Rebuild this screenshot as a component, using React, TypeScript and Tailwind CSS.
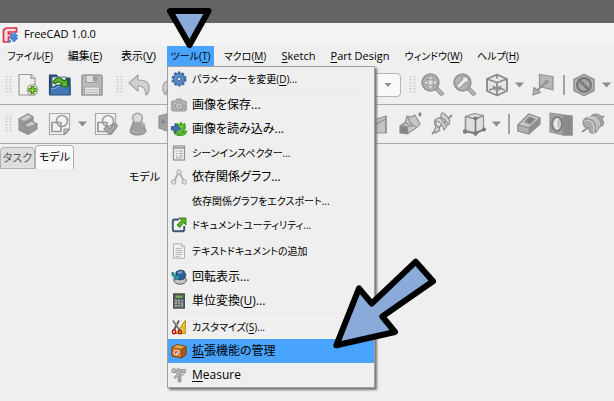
import { Fragment, type ReactNode } from 'react';
import clsx from 'clsx';

interface LabelProps {
  text: string;
  mnemonic?: string;
}

interface MenuEntry extends LabelProps {
  icon?: ReactNode;
  small?: boolean;
  active?: boolean;
  separated?: boolean;
}

function Label({ text, mnemonic }: LabelProps) {
  if (!mnemonic) return <span>{text}</span>;
  const at = text.lastIndexOf(mnemonic);
  return (
    <span>
      {text.slice(0, at)}
      <span className="underline underline-offset-2">{mnemonic}</span>
      {text.slice(at + 1)}
    </span>
  );
}

function Icon16({ children }: { children: ReactNode }) {
  return <svg viewBox="0 0 16 16" className="w-4 h-4 shrink-0" aria-hidden="true">{children}</svg>;
}

const menuEntries: MenuEntry[] = [
  {
    text: 'パラメーターを変更(D)...', mnemonic: 'D', small: true,
    icon: (
      <Icon16>
        <circle cx="8" cy="8" r="6.2" fill="none" stroke="#3c689f" strokeWidth="2.6" strokeDasharray="2.6 1.3" />
        <circle cx="8" cy="8" r="5.8" fill="#4b7fbd" stroke="#3c689f" strokeWidth=".7" />
        <circle cx="8" cy="8" r="3.7" fill="none" stroke="#6896cc" />
        <circle cx="8" cy="8" r="1.8" fill="#e8eef5" stroke="#2f5688" strokeWidth=".7" />
      </Icon16>
    ),
  },
  {
    text: '画像を保存...', separated: true,
    icon: (
      <Icon16>
        <path d="M.7 5q0-1 1-1h2.800l1-2h5l1 2h2.800q1 0 1 1v8q0 1-1 1H1.700q-1 0-1-1z" fill="#adadad" stroke="#989898" />
        <path d="M2 6h12" stroke="#c4c4c4" />
        <circle cx="8" cy="9" r="3.400" fill="#d6d6d6" stroke="#929292" />
        <circle cx="8" cy="9" r="1.800" fill="#a6a6a6" />
      </Icon16>
    ),
  },
  {
    text: '画像を読み込み...',
    icon: (
      <Icon16>
        <path d="M5 5l1-3 2 2 2-3 1.500 3 2-2 1 4q0 3-3 4v2q1-3 4-2 0 4-5 4.500H7Q3 14 2.500 10q4 0 5.500 3v-3Q5 9 5 5z" fill="#57bd2b" stroke="#2f8a16" strokeWidth=".8" />
        <path d="M8 5l1 2 2-2" fill="none" stroke="#a2ef69" />
        <path d="M.5 5.500H4v-3l5.500 4.800L4 12V9H.5z" fill="#3e74b5" stroke="#1f477b" strokeWidth=".8" />
      </Icon16>
    ),
  },
  {
    text: 'シーンインスペクター...', small: true,
    icon: (
      <Icon16>
        <rect x="2.500" y="1" width="11" height="14" fill="#f1f1f1" stroke="#929292" strokeWidth="1.200" />
        <path d="M3 3h10" stroke="#aaa" strokeWidth="2" />
        <path d="M4.500 6h1.500M7.500 6h4M5 8.500h1.500M8 8.500h4M5 11h1.500M8 11h4M5 13h6" stroke="#9f9f9f" />
      </Icon16>
    ),
  },
  {
    text: '依存関係グラフ...',
    icon: (
      <Icon16>
        <path d="M8 3L3 12.500M8 3l5 9.500" stroke="#b3b3b3" strokeWidth="2" />
        <g fill="#e3e3e3" stroke="#a6a6a6">
          <circle cx="8" cy="3" r="2.200" />
          <circle cx="2.700" cy="13" r="2.200" />
          <circle cx="13.300" cy="13" r="2.200" />
        </g>
      </Icon16>
    ),
  },
  { text: '依存関係グラフをエクスポート...', small: true },
  {
    text: 'ドキュメントユーティリティ...', small: true,
    icon: (
      <Icon16>
        <path d="M8 2.500H3.500Q1.800 2.500 1.800 4v8.500q0 1.700 1.700 1.700h8q1.700 0 1.700-1.700V9" fill="none" stroke="#3a5576" strokeWidth="1.900" />
        <path d="M8 1h7v7l-2.300-2.300-4.200 4.800-2.500-2.500 4.800-4.500z" fill="#59b71e" stroke="#236c08" strokeWidth=".8" />
      </Icon16>
    ),
  },
  {
    text: 'テキストドキュメントの追加', small: true, separated: true,
    icon: (
      <Icon16>
        <path d="M2.500.8h8l3 3v11.400h-11z" fill="#f2f2f2" stroke="#b0b0b0" />
        <path d="M10.500.8v3h3M4.500 5.500h6M4.500 7.500h7M4.500 9.500h7M4.500 11.500h7M4.500 13.500h4" fill="none" stroke="#b8b8b8" />
      </Icon16>
    ),
  },
  {
    text: '回転表示...', separated: true,
    icon: (
      <Icon16>
        <ellipse cx="9" cy="11" rx="6.400" ry="4.200" fill="#c6c6c1" stroke="#5c5c5c" />
        <path d="M5 3l4-2 4 1 2 4-2 4-5 1-3-3z" fill="#315e95" stroke="#183250" strokeWidth=".8" />
        <path d="M6 4l3-2 3 1-3 2z" fill="#75a8d5" />
        <path d="M1 3q-1 5 4 6l-1 2 5-2-3-4-.5 2Q3 7 3 4z" fill="#25a9ae" stroke="#075f66" strokeWidth=".7" />
      </Icon16>
    ),
  },
  {
    text: '単位変換(U)...', mnemonic: 'U',
    icon: (
      <Icon16>
        <rect x="2.500" y=".8" width="11" height="14.400" fill="#626762" stroke="#4c504c" />
        <rect x="4" y="2" width="8" height="3.500" fill="#7da56b" stroke="#263e22" strokeWidth=".6" />
        <path d="M4 7.500h2M7 7.500h2M4 10h2M7 10h2M4 12.700h2M7 12.700h2" stroke="#b4b7b3" strokeWidth="1.400" />
        <path d="M11 7v1.500M11 9.500v4" stroke="#78a3ce" strokeWidth="2" />
      </Icon16>
    ),
  },
  {
    text: 'カスタマイズ(S)...', mnemonic: 'S', small: true, separated: true,
    icon: (
      <Icon16>
        <path d="M14.300 1.500v13H5z" fill="#edc92b" stroke="#af8507" />
        <path d="M12 8v4H9z" fill="#fff4ad" stroke="#af8507" strokeWidth=".5" />
        <path d="M2 1.500l7 10M8 1.500L3 11" stroke="#555" strokeWidth="1.700" />
        <path d="M2.500 1.500l6 8" stroke="#ddd" strokeWidth=".7" />
        <ellipse cx="3" cy="12.800" rx="1.600" ry="2" fill="none" stroke="#bd1616" strokeWidth="1.400" />
        <ellipse cx="9" cy="13" rx="1.500" ry="1.800" fill="none" stroke="#bd1616" strokeWidth="1.400" />
      </Icon16>
    ),
  },
  {
    text: '拡張機能の管理', mnemonic: '拡', active: true,
    icon: (
      <Icon16>
        <path d="M.8 4.500L6 1.500l9 2v8l-4.500 3.500-9.700-2z" fill="#cf7a28" stroke="#7a4310" />
        <path d="M.8 4.500l9.700 1.800 4.500-2.800-9-2z" fill="#e5a64f" stroke="#7a4310" strokeWidth=".7" />
        <path d="M10.500 6.300V15l4.500-3.500v-8z" fill="#a85a1a" stroke="#7a4310" strokeWidth=".7" />
        <circle cx="5.500" cy="9.500" r="2.800" fill="#f4e9de" />
        <path d="M4.500 11V8.300h2.300M4.500 9.700H6" fill="none" stroke="#d52f35" />
        <path d="M7 9.500v1.800" stroke="#356fae" />
      </Icon16>
    ),
  },
  {
    text: 'Measure', mnemonic: 'M',
    icon: (
      <Icon16>
        <path d="M1 2.500l2-1.500 1 1.500h2L7.500 1 9 2.500h5.500v3H10v9.500H7V9L4 11.500 3 10l3-2.500V5.500H1z" fill="#bcbcbc" stroke="#959595" strokeWidth=".9" />
        <path d="M10 8h2.500l1-2.500M8.500 6v8M4 4h8" fill="none" stroke="#909090" strokeWidth=".9" />
      </Icon16>
    ),
  },
];

function Handle({ wide }: { wide?: boolean }) {
  return (
    <svg viewBox="0 0 7 18" className={clsx('h-[18px] shrink-0 w-[7px]', wide ? 'ml-2 mr-px' : 'ml-[5px]')} aria-hidden="true">
      <path d="M1.500 0v18M5.500 0v18" stroke="#c4c4c4" strokeWidth="1.500" strokeDasharray="1.500 1.500" />
    </svg>
  );
}

function Divider() {
  return <span className="w-[9px] shrink-0 flex justify-center"><span className="w-[2px] h-5 bg-[#a2a2a2]" /></span>;
}

function Caret({ label }: { label: string }) {
  return (
    <button type="button" aria-label={label} className="w-[14px] h-8 shrink-0 flex items-center justify-center">
      <svg viewBox="0 0 10 6" className="w-[10px] h-[6px]"><path d="M0 .5h9L4.500 5.500z" fill="#8c8c8c" /></svg>
    </button>
  );
}

function Tool({ label, children }: { label: string; children: ReactNode }) {
  return (
    <button type="button" aria-label={label} className="w-8 h-8 shrink-0 flex items-center justify-center">
      <svg viewBox="0 0 24 24" className="w-6 h-6" fill="#bcbcbc" stroke="#909090" strokeWidth="1.200" strokeLinejoin="round">
        {children}
      </svg>
    </button>
  );
}

function Magnifier() {
  return (
    <>
      <path d="M14 14l8 8" stroke="#939393" strokeWidth="4.500" />
      <path d="M14 14l8 8" stroke="#b5b5b5" strokeWidth="2.200" />
      <circle cx="9.500" cy="9.500" r="8.300" fill="#b2b2b2" stroke="#959595" strokeWidth="1.800" />
    </>
  );
}

function FileToolbar() {
  return (
    <div className="flex items-center h-[39px] border-b border-[#a8a8a8]">
      <Handle />
      <Tool label="新規">
        <path d="M3 1.500h12l4 4V22H3z" fill="#f0f0ee" stroke="#9a9b98" />
        <path d="M15 1.500v4h4" fill="#ddd" stroke="#9a9b98" />
        <circle cx="16.500" cy="17" r="5.300" fill="#f0f5ed" stroke="#a5aaa0" />
        <path d="M16.500 13v8M12.500 17h8" stroke="#2e6d0b" strokeWidth="3.600" />
        <path d="M16.500 13.700v6.600M13.200 17h6.600" stroke="#8ed93e" strokeWidth="1.700" />
      </Tool>
      <Tool label="開く">
        <path d="M1.500 2h7l2 3H22v16H1.500z" fill="#204a87" stroke="#294968" />
        <path d="M4 4h14v12H4z" fill="#eff3ee" stroke="#55708b" />
        <path d="M2 14h4l3-2h13v10H2z" fill="#4177b2" stroke="#244b7b" />
        <path d="M3 15.500h4l3-2h11" fill="none" stroke="#7aa7d4" />
        <path d="M5 9q5-8 11-1l3-2 1 8-8-1 2-2q-4-4-7 0z" fill="#59b82e" stroke="#24670d" />
      </Tool>
      <Tool label="保存">
        <path d="M2 4q0-2 2-2h16q2 0 2 2v18H2z" fill="#bababa" stroke="#999" strokeWidth="1.600" />
        <path d="M6 2.500h12v7H6z" fill="#dedede" stroke="#a2a2a2" />
        <path d="M13.500 3.800h3v4h-3z" fill="#a1a1a1" stroke="#989898" />
        <path d="M4.500 14h15v7.500h-15z" fill="#e7e7e7" stroke="#a3a3a3" />
        <path d="M6 17h12M6 19.500h12" stroke="#b8b8b8" />
      </Tool>
      <Handle wide />
      <Tool label="元に戻す">
        <path d="M10 2v5q12 0 11 9 0 4-3 6 0-9-8-9v5L1 10z" fill="#d0d0d0" stroke="#a3a3a3" />
      </Tool>
      <Tool label="やり直し">
        <path d="M14 2v5Q2 7 3 16q0 4 3 6 0-9 8-9v5l9-8z" fill="#d0d0d0" stroke="#a3a3a3" />
      </Tool>
      <div className="relative w-[213px] shrink-0">
        <select aria-label="ワークベンチ" className="block appearance-none w-full h-6 pl-2 rounded-sm border border-[#b5b5b5] bg-[#f9f9f9] text-[11px]">
          <option>Part Design</option>
        </select>
        <svg viewBox="0 0 8 5" className="absolute right-[9px] top-[10px] w-2 h-[5px] pointer-events-none"><path d="M.5 0h7L4 4z" fill="#8c8c8c" /></svg>
      </div>
      <Handle wide />
      <Tool label="全てにフィット">
        <Magnifier />
        <path d="M9.500 3l2.800 3.300H6.700zM9.500 16l2.800-3.300H6.700zM3 9.500l3.300-2.800v5.600zM16 9.500l-3.300-2.800v5.600z" fill="#eee" strokeWidth=".7" />
        <path d="M7.500 7.500h4v4h-4z" fill="#dedede" stroke="none" />
      </Tool>
      <Tool label="選択にフィット">
        <Magnifier />
        <path d="M15 4v7l-2.200-2.200L6 15.500 3.500 13 10 6.200 8 4z" fill="#ededed" strokeWidth="1" />
      </Tool>
      <Tool label="ビュー">
        <path d="M12 1.500L22 6v12l-10 4.500L2 18V6z" fill="#e6e6e6" stroke="#8a8a8a" strokeWidth="1.900" />
        <path d="M2 6l10 3.500L22 6M12 9.500v13M12 1.500v4" fill="none" stroke="#8a8a8a" strokeWidth="1.800" />
        <path d="M4 17l6-2M7.500 13.500l3 1-1 3M20 17l-6-2M16.500 13.500l-3 1 1 3" fill="none" stroke="#8a8a8a" strokeWidth="1.400" />
      </Tool>
      <Caret label="ビューの選択" />
      <Tool label="リンクに移動">
        <path d="M8.500 1.500L22 3.500V17L8.500 13.500z" fill="#b7b7b7" />
        <path d="M15.500 9L6 17.500" fill="none" strokeWidth="2" />
        <path d="M2 22l1-7.500 6.500 5z" fill="#b5b5b5" />
        <circle cx="15.500" cy="9" r="1.500" fill="#a5a5a5" />
      </Tool>
      <Divider />
      <Tool label="描画スタイル">
        <path d="M12 1.500L22 6.500v11L12 22.500 2 17.500v-11z" fill="#acacac" strokeWidth="1.500" />
        <circle cx="12" cy="12" r="7" fill="#a8a8a8" stroke="#7a7a7a" strokeWidth="2.600" />
        <path d="M7 7l10 10" stroke="#7a7a7a" strokeWidth="2.600" />
        <circle cx="12" cy="12" r="8.700" fill="none" stroke="#c6c6c6" strokeWidth=".7" />
      </Tool>
      <Caret label="描画スタイルの選択" />
    </div>
  );
}

function SketchShapes() {
  return (
    <>
      <path d="M1.500 1.500h20V17l-4.500 5.500H1.500z" fill="#f2f2f2" stroke="#aaa" />
      <circle cx="14" cy="9" r="5.500" fill="none" stroke="#9c9c9c" strokeWidth="1.600" />
      <path d="M4 10.500h9v9H4z" fill="none" stroke="#999" strokeWidth="1.700" />
    </>
  );
}

function DesignToolbar() {
  return (
    <div className="flex items-center h-[39px] border-b border-[#a8a8a8]">
      <div className="flex items-center w-[362px] shrink-0 overflow-hidden">
        <Handle />
        <Tool label="ボディー">
          <path d="M3 7l9-5 5 3v5l4 2v5l-9 5.500L3 18z" fill="#979797" />
          <path d="M3 7l9-5 5 3-9 5zM12 15.500l-4-2.500 9-5v2l4 2z" fill="#cacaca" />
          <path d="M8 10v4l4 2v6" fill="none" />
        </Tool>
        <Tool label="スケッチ">
          <SketchShapes />
          <path d="M16 22.500V17h5.500z" fill="#ccc" />
        </Tool>
        <Caret label="スケッチの選択" />
        <Tool label="スケッチを検証">
          <SketchShapes />
          <path d="M10 17l3-3 3 3 5-6 2.500 3-7.500 8.500z" fill="#a8a8a8" />
        </Tool>
        <Tool label="形状を確認">
          <path d="M8 8h7l5 11q-2 4-8 4-7 0-8-4z" fill="#9f9f9f" />
          <path d="M5 19q7 3 14 0" fill="none" stroke="#b0b0b0" />
          <circle cx="11.500" cy="6" r="4.800" fill="#dadada" stroke="#a6a6a6" strokeWidth="1.600" />
          <path d="M15 10l4 4" stroke="#b0b0b0" strokeWidth="2.500" />
        </Tool>
        <Tool label="サブシェイプバインダー">
          <path d="M1 4l8-2 14 4v14l-14-1-8-3z" fill="#a2a2a2" />
          <circle cx="5" cy="10" r="1.500" fill="#777" />
        </Tool>
      </div>
      <Tool label="加算ロフト">
        <path d="M2 10l18-6v17H2z" fill="#c3c3c3" />
        <path d="M2 19l8-7 10-5M20 4v17" fill="none" />
      </Tool>
      <Tool label="加算パイプ">
        <path d="M9 4q4 2 8-1l5 9q-4 5-12 9l-1-7q-3 1-6-1 5-1 6-9z" fill="#c8c8c8" />
        <path d="M2 14l7 1 1 7-8-1z" fill="#858585" />
        <path d="M9 4q4 9 9 11M2 14l6-3 6 3-5 1" fill="none" />
        <ellipse cx="22" cy="2.500" rx="1" ry="1.600" fill="#777" />
      </Tool>
      <Tool label="加算らせん">
        <path d="M2 22L22 3" strokeWidth="2" />
        <path d="M6 15q-4-7 2-9 7-1 10 7 3-2 1-6-5-7-7-6-4 4 5 13l-3 4q-2-8-8-9-1 2 4 9l-4 3q-3-3 0-6z" fill="#d0d0d0" />
      </Tool>
      <Tool label="加算プリミティブ">
        <path d="M3.500 4.500l9-3 9 2v14l-9 3-9-2z" fill="#dedede" />
        <path d="M3.500 4.500l10 2.500 8-3.500M3.500 4.500V19" fill="none" strokeWidth="1.400" />
        <path d="M13.500 7v14.500M3 19.500l10.500 2 8.500-4" fill="none" stroke="#777" strokeWidth="1.600" />
        <g fill="#808080" stroke="#777"><circle cx="13.500" cy="6.500" r="1.400" /><circle cx="3" cy="19.500" r="1.600" /><circle cx="13.500" cy="21.500" r="1.600" /><circle cx="22" cy="17.500" r="1.400" /></g>
      </Tool>
      <Caret label="加算プリミティブの選択" />
      <Divider />
      <Tool label="ポケット">
        <path d="M1 13L12 2l11 4v6L12 22 1 19z" fill="#8f8f8f" />
        <path d="M1 13L12 2l11 4-11 10z" fill="#c6c6c6" />
        <path d="M1 13l11 3v6L1 19z" fill="#b0b0b0" />
        <path d="M8 10l4.500-5 5.500 2-5 5z" fill="#808080" />
      </Tool>
      <Tool label="ホール">
        <path d="M1 1l22 3v19H14L1 20z" fill="#a2a2a2" />
        <path d="M14 4l9 0v19h-9z" fill="#8a8a8a" />
        <ellipse cx="8" cy="12" rx="5" ry="7" fill="#c6c6c6" stroke="#777" strokeWidth="1.600" />
        <path d="M5 12q1-6 4.500-6-3 5 0 11-3.500 1-4.500-5z" fill="#ededed" stroke="none" />
      </Tool>
      <Tool label="グルーブ">
        <path d="M1 20L23 4" strokeWidth="2" />
        <path d="M2 10q1-5 8-5 1-3 5-3 6 1 6 5 3 4 0 7l-3 1q-1 5-5 6-5 1-5-5-6 0-6-6z" fill="#ababab" />
        <path d="M3 9q7-2 9 3 2 4 1 9M6 6q8-1 10 6v6M10 5q7 0 9 9" fill="none" stroke="#d4d4d4" />
        <path d="M4 8q7-2 10 4 1 4 0 8M12 3q8 1 8 10" fill="none" strokeWidth="1" />
      </Tool>
    </div>
  );
}

function ToolsMenu() {
  return (
    <div role="menu" className="absolute left-0 top-full z-10 w-[208px] border border-[#a0a0a0] bg-[#efefef] shadow-[2px_2px_2px_#777777]">
      {menuEntries.map(entry => (
        <Fragment key={entry.text}>
          {entry.separated && <div role="separator" className="h-[2px] mx-2 border-t border-[#e9e9e9] bg-[#f2f2f2]" />}
          <button
            type="button"
            role="menuitem"
            className={clsx(
              'w-full h-6 flex items-center gap-[5px] pl-[3px] text-left whitespace-nowrap',
              entry.small ? 'text-[10px]' : 'text-xs',
              entry.active && 'bg-[#48a4ff]',
            )}
          >
            {entry.icon ?? <span className="w-4 shrink-0" />}
            <Label text={entry.text} mnemonic={entry.mnemonic} />
          </button>
        </Fragment>
      ))}
    </div>
  );
}

function BarItem({ text, mnemonic, small }: LabelProps & { small?: boolean }) {
  return (
    <button type="button" className={clsx('h-5 flex items-center justify-center whitespace-nowrap', small ? 'text-[10px]' : 'text-[11px]')}>
      <Label text={text} mnemonic={mnemonic} />
    </button>
  );
}

function MenuBar() {
  return (
    <nav className="grid grid-cols-[60px_50px_57px_47px_62px_45px_78px_69px_60px] h-5">
      <BarItem text="ファイル(F)" mnemonic="F" small />
      <BarItem text="編集(E)" mnemonic="E" />
      <BarItem text="表示(V)" mnemonic="V" />
      <div className="relative">
        <button type="button" aria-haspopup="menu" aria-expanded="true" className="h-5 w-full flex items-center justify-center whitespace-nowrap bg-[#48a4ff] text-[10px]">
          <Label text="ツール(T)" mnemonic="T" />
        </button>
        <ToolsMenu />
      </div>
      <BarItem text="マクロ(M)" mnemonic="M" small />
      <BarItem text="Sketch" mnemonic="S" />
      <BarItem text="Part Design" mnemonic="P" />
      <BarItem text="ウィンドウ(W)" mnemonic="W" small />
      <BarItem text="ヘルプ(H)" mnemonic="H" small />
    </nav>
  );
}

export default function App() {
  return (
    <div className="relative min-h-screen overflow-hidden bg-[#efefef] text-black font-['Open_Sans','Noto_Sans_CJK_JP',sans-serif] [font-feature-settings:'palt']">
      <div className="h-[23px] bg-[#646464]" />
      <header className="h-[23px] flex items-center gap-[6px] pl-[2px] bg-[#f3f3f3]">
        <svg viewBox="0 0 16 16" className="w-4 h-4" aria-hidden="true">
          <path d="M1.500 3l2.500-2h10.500v4H6.500v2h4v3h-4v5h-5z" fill="#f6d9dc" stroke="#d5344a" strokeWidth="1.700" />
          <path d="M9 7h3V5h2v2l2 1-1 2 1 2-2 1-1 2h-2l-1-2-2-1 1-2-1-1z" fill="#418bd3" />
          <path d="M5 15.500l4-3v3z" fill="#418bd3" />
        </svg>
        <span className="text-[11px]">FreeCAD 1.0.0</span>
      </header>
      <MenuBar />
      <FileToolbar />
      <DesignToolbar />
      <main>
        <div role="tablist" className="flex items-end h-[25px] text-[11px] whitespace-nowrap">
          <button type="button" role="tab" aria-selected="false" className="w-[35px] h-[22px] border border-[#b0b0b0] rounded-t-sm bg-[#dedede] text-[#555555]">タスク</button>
          <button type="button" role="tab" aria-selected="true" className="w-[39px] h-6 border border-b-0 border-[#b0b0b0] rounded-t-sm bg-[#f9f9f9]">モデル</button>
        </div>
        <p className="pl-[129px] text-[11px] leading-4">モデル</p>
      </main>
      <svg viewBox="0 0 46 42" className="absolute left-[166px] top-[7px] z-20 w-[46px] h-[42px] pointer-events-none" aria-hidden="true">
        <path d="M4 4h38.500L23.500 38z" fill="#8aaad9" stroke="#000" strokeWidth="6" strokeLinejoin="round" />
      </svg>
      <svg viewBox="0 0 106 94" className="absolute left-[332px] top-[257px] z-20 w-[106px] h-[94px] pointer-events-none" aria-hidden="true">
        <path d="M4.300 88.300L27 31.300l12.700 15.200 44-41.800L101 24.300 50.300 59.500 63 75z" fill="#8aaad9" stroke="#000" strokeWidth="6" strokeLinejoin="round" />
      </svg>
    </div>
  );
}
